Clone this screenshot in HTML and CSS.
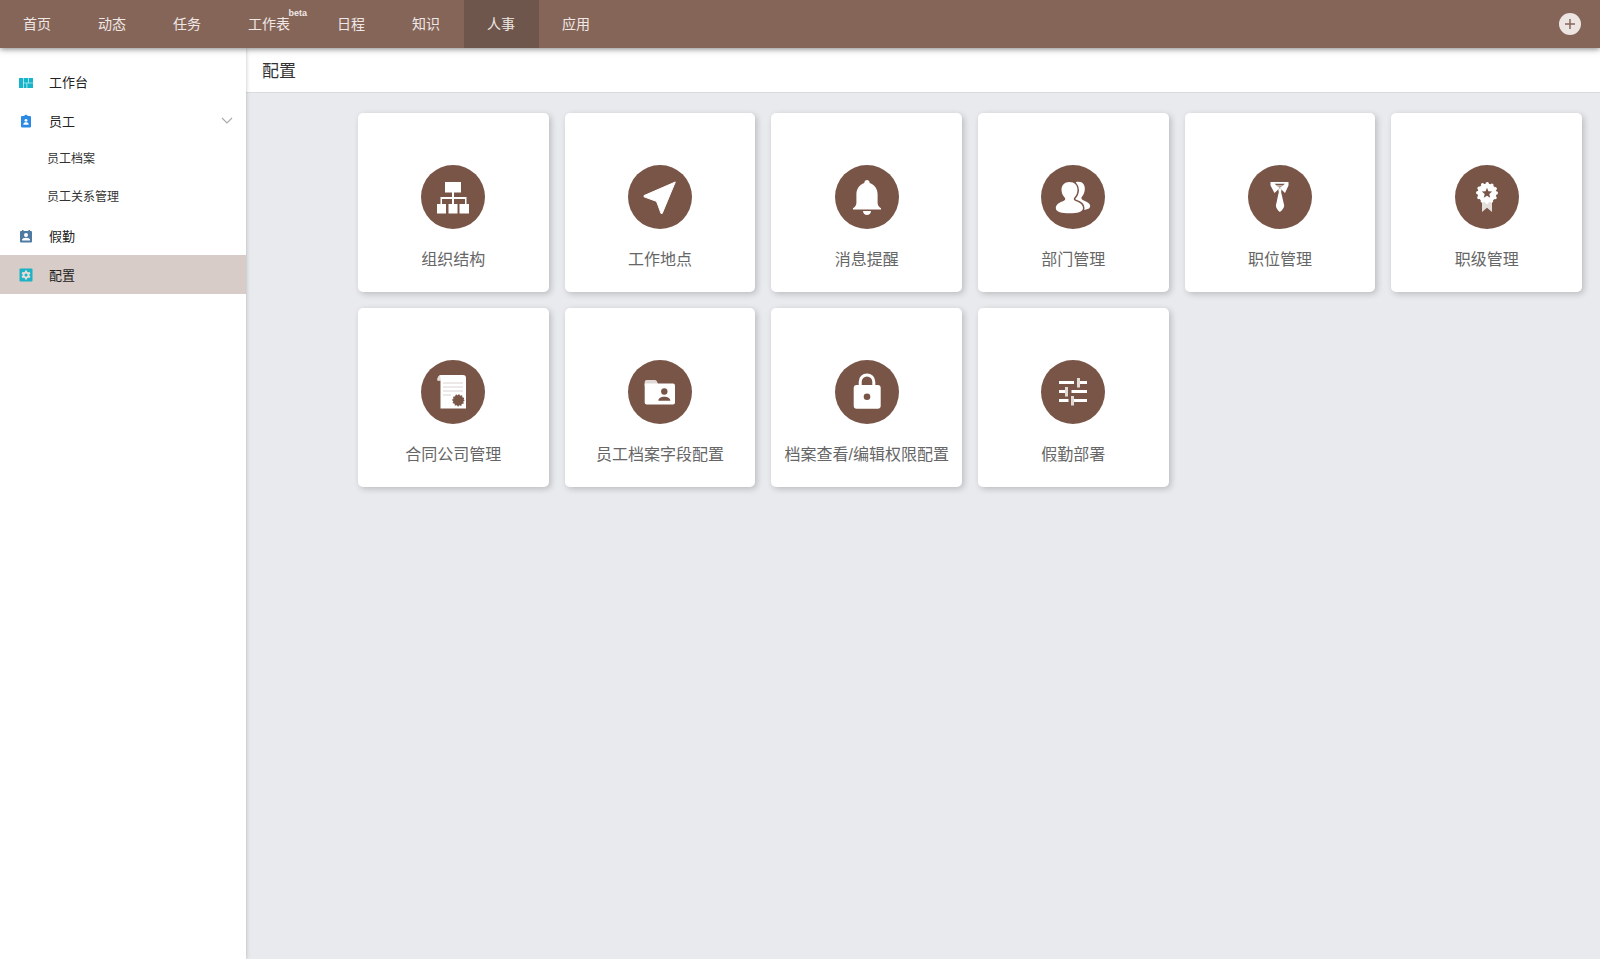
FILE: index.html
```html
<!DOCTYPE html>
<html lang="zh-CN">
<head>
<meta charset="utf-8">
<title>配置</title>
<meta name="viewport" content="width=device-width, initial-scale=1">
<link rel="stylesheet" href="styles.css">
</head>
<body>
<header class="topbar">
  <nav class="topnav">
    <a class="topnav-link" href="#">首页</a>
    <a class="topnav-link" href="#">动态</a>
    <a class="topnav-link" href="#">任务</a>
    <a class="topnav-link" href="#">工作表<span class="beta">beta</span></a>
    <a class="topnav-link" href="#">日程</a>
    <a class="topnav-link" href="#">知识</a>
    <a class="topnav-link active" href="#">人事</a>
    <a class="topnav-link" href="#">应用</a>
  </nav>
  <button class="add" type="button" aria-label="新建">
    <svg width="22" height="22" viewBox="0 0 22 22"><circle cx="11" cy="11" r="11" fill="#ece5e2"/><path d="M11 6v10M6 11h10" stroke="#866559" stroke-width="1.5"/></svg>
  </button>
</header>
<div class="layout">
  <nav class="sidebar">
    <a class="side-link" href="#">
      <svg class="side-icon" viewBox="0 0 16 16" fill="#16b5c9"><path d="M1 4h4v10H1zM5.600 4h4.400v4.700H5.600zM10.600 4H15v4.700h-4.400zM5.600 9.300h3V14h-3zM9.200 9.300H15V14H9.200z"/></svg>
      工作台
    </a>
    <button class="side-link" type="button" aria-expanded="true">
      <svg class="side-icon" viewBox="0 0 16 16"><path fill="#2b8ae6" d="M4 3h2.200a2 2 0 0 1 3.600 0H12a1 1 0 0 1 1 1v9.500a1 1 0 0 1-1 1H4a1 1 0 0 1-1-1V4a1 1 0 0 1 1-1z"/><circle cx="8" cy="7.300" r="1.400" fill="#fff"/><path d="M5.400 11.700v-.7c0-1.200 1.300-1.700 2.600-1.700s2.600.5 2.600 1.700v.7z" fill="#fff"/></svg>
      员工
      <svg class="chevron" viewBox="0 0 12 8"><path d="M1 1l5 5 5-5" fill="none" stroke="#aaa" stroke-width="1.200"/></svg>
    </button>
    <a class="sub-link" href="#">员工档案</a>
    <a class="sub-link" href="#">员工关系管理</a>
    <a class="side-link" href="#">
      <svg class="side-icon" viewBox="0 0 16 16"><path fill="#4f7ba3" d="M3 3h1V2h1.500v1h5V2H12v1h1a1 1 0 0 1 1 1v9.500a1 1 0 0 1-1 1H3a1 1 0 0 1-1-1V4a1 1 0 0 1 1-1z"/><circle cx="8" cy="7" r="2" fill="#fff"/><path d="M4 12.500v-.7C4 10.400 6 9.700 8 9.700s4 .7 4 2.100v.7z" fill="#fff"/></svg>
      假勤
    </a>
    <a class="side-link active" href="#">
      <svg class="side-icon" viewBox="0 0 16 16"><rect x="1.500" y="1.500" width="13" height="13" rx="1" fill="#1db3c4"/><path d="M8 3.500v9M4.100 5.750l7.800 4.500M4.100 10.250l7.800-4.500" stroke="#e6dedb" stroke-width="2.200"/><circle cx="8" cy="8" r="3.300" fill="#e6dedb"/><circle cx="8" cy="8" r="1.500" fill="#1db3c4"/></svg>
      配置
    </a>
  </nav>
  <main class="content">
    <h1 class="page-title">配置</h1>
    <div class="cards">
      <a class="card" href="#">
        <svg class="card-icon" viewBox="0 0 64 64"><circle cx="32" cy="32" r="32" fill="#795548"/><path fill="#fff" d="M24 17h16v10.500h-7V32h12.500v7H48v9.500h-9.500V39H44v-5H33v5h3.500v9.500h-9V39H31v-5H21v5h4v9.500h-9V39h3.500v-7H31v-4.500h-7z"/></svg>
        组织结构
      </a>
      <a class="card" href="#">
        <svg class="card-icon" viewBox="0 0 64 64"><circle cx="32" cy="32" r="32" fill="#795548"/><path fill="#fff" stroke="#fff" stroke-linejoin="round" d="M47.300 17L16 30.600v1.200l11.500 4.200q1.200.6 1.700 2L33 48.500h1.200z"/></svg>
        工作地点
      </a>
      <a class="card" href="#">
        <svg class="card-icon" viewBox="0 0 64 64"><circle cx="32" cy="32" r="32" fill="#795548"/><path fill="#fff" d="M29.300 18c0-4 5.400-4 5.400 0 5 1.700 7.900 6 7.900 11.500V38c0 2.300 1.400 4 3.400 5.200v1.300H18v-1.300c2-1.200 3.400-2.900 3.400-5.200v-8.500C21.400 24 24.300 19.700 29.300 18zM28 46h8c0 5.300-8 5.300-8 0z"/></svg>
        消息提醒
      </a>
      <a class="card" href="#">
        <svg class="card-icon" viewBox="0 0 64 64"><circle cx="32" cy="32" r="32" fill="#795548"/><path fill="#fff" d="M35 17c6-1.500 9.300 2.400 8.800 7.500-.3 3.200-1.400 5.500-3.100 7.500-.8 1.500 0 2.500 2 3.400 4 1.600 6.500 3.400 6.500 5.600 0 2.400-2.500 3.500-6.700 3.800L34 36z"/><path fill="#fff" stroke="#795548" stroke-width="3" paint-order="stroke" d="M28.500 17c5 0 8 3.200 8 8 0 3.300-1.500 6-3.500 8-.8 1.500.2 2.500 2 3.200 4.500 1.300 7 3.800 7 6.800 0 4-6 5.300-13.500 5.300S14.800 47 14.800 43c0-3 2.700-5.500 7.200-6.800 1.800-.7 2.800-1.700 2-3.200-2-2-3.500-4.700-3.500-8 0-4.800 3-8 8-8z"/></svg>
        部门管理
      </a>
      <a class="card" href="#">
        <svg class="card-icon" viewBox="0 0 64 64"><circle cx="32" cy="32" r="32" fill="#795548"/><path fill="#fff" d="M22.500 17h18v3.500L37 28l-5.200-5-5.300 5-4-7.500z"/><path fill="#795548" d="M26.500 18.800h10.500l-5.200 4z"/><path fill="#c5b5af" d="M28.500 20h6.500l-1.600 1.800h-3.400z"/><path fill="#fff" d="M30.300 24.500l1.500-1.300 1.700 1.300-.4 2.500 3.100 13.500c.1 2-2.200 5-4.400 6.500-2-1.500-4-4.500-3.900-6.500L30.800 27z"/></svg>
        职位管理
      </a>
      <a class="card" href="#">
        <svg class="card-icon" viewBox="0 0 64 64"><circle cx="32" cy="32" r="32" fill="#795548"/><path fill="#e5dfdc" d="M27 36v11l5-4.200 5 4.200V36z"/><circle cx="32" cy="28" r="9.500" fill="#fff"/><circle cx="32" cy="28" r="9.300" fill="none" stroke="#fff" stroke-width="3.400" stroke-linecap="round" stroke-dasharray="0 4.869"/><path fill="#795548" d="M32 22.800l1.400 3.500 3.800.3-2.900 2.400.9 3.700-3.200-2-3.200 2 .9-3.700-2.900-2.400 3.800-.3z"/></svg>
        职级管理
      </a>
      <a class="card" href="#">
        <svg class="card-icon" viewBox="0 0 64 64"><circle cx="32" cy="32" r="32" fill="#795548"/><path fill="#fff" d="M19.500 15H42q3 0 3 3v30.500H19.500V20.500h-3q-.4-4.500 3-5.500z"/><path d="M20 20.500h-3.500q-.4-3.500 2.500-5.200" fill="#e5dfdc"/><path d="M22 23h20M22 27h20M22 31h20M22 35h8" stroke="#d8d2d0"/><circle cx="37.300" cy="40.300" r="5.300" fill="#795548"/><circle cx="37.300" cy="40.300" r="5.300" fill="none" stroke="#795548" stroke-width="1.700" stroke-linecap="round" stroke-dasharray="0 2.775"/></svg>
        合同公司管理
      </a>
      <a class="card" href="#">
        <svg class="card-icon" viewBox="0 0 64 64"><circle cx="32" cy="32" r="32" fill="#795548"/><path fill="#e0d9d6" d="M16.700 26v-4q0-2 2-2H27q1.500 0 2 1.500l1 2.500z"/><path fill="#fff" d="M16.700 23.500H45q2 0 2 2v17q0 2-2 2H18.700q-2 0-2-2z"/><circle cx="36.300" cy="31.500" r="3.200" fill="#795548"/><path fill="#795548" d="M30.300 40.800c0-5.300 12-5.300 12 0z"/></svg>
        员工档案字段配置
      </a>
      <a class="card" href="#">
        <svg class="card-icon" viewBox="0 0 64 64"><circle cx="32" cy="32" r="32" fill="#795548"/><path d="M25.200 26v-4.300a6.800 6.800 0 0 1 13.600 0V26" fill="none" stroke="#fff" stroke-width="3"/><rect x="18.700" y="25" width="27" height="23.700" rx="3" fill="#fff"/><circle cx="32" cy="36.700" r="3.300" fill="#795548"/></svg>
        档案查看/编辑权限配置
      </a>
      <a class="card" href="#">
        <svg class="card-icon" viewBox="0 0 64 64"><circle cx="32" cy="32" r="32" fill="#795548"/><path fill="#fff" d="M18 21h15v3H18zM39 21h7v3h-7zM18 30h6v3h-6zM30.500 30H46v3H30.500zM18 39h9.500v3H18zM33 39h13v3H33z"/><path fill="#e0d9d6" d="M36 18h3v9.500h-3zM24 27h3v9.500h-3zM30 36h3v9.500h-3z"/></svg>
        假勤部署
      </a>
    </div>
  </main>
</div>
</body>
</html>
```

FILE: styles.css
```css
* {
  box-sizing: border-box;
}

body {
  margin: 0;
  min-height: 100vh;
  display: flex;
  flex-direction: column;
  background: #e8eaee;
  color: #333;
  font-family: "Liberation Sans", "Noto Sans CJK SC", sans-serif;
  font-size: 13px;
}

a {
  color: inherit;
  text-decoration: none;
}

button {
  border: 0;
  background: none;
  font: inherit;
  color: inherit;
  cursor: pointer;
}

.topbar {
  position: relative;
  z-index: 2;
  display: flex;
  align-items: center;
  justify-content: space-between;
  height: 48px;
  padding-right: 19px;
  background: #866559;
  box-shadow: 0 1px 6px rgba(0, 0, 0, 0.5);
}

.topnav {
  display: flex;
}

.topnav-link {
  position: relative;
  padding: 0 24px 0 23px;
  color: #efe8e6;
  font-size: 14px;
  line-height: 48px;
}

.topnav-link.active {
  background: #6f564c;
}

.beta {
  position: absolute;
  top: 8px;
  right: 7px;
  font-size: 9px;
  font-weight: bold;
  line-height: 10px;
}

.add {
  display: flex;
  padding: 0;
}

.layout {
  flex: 1;
  display: flex;
}

.sidebar {
  position: relative;
  z-index: 1;
  flex: none;
  width: 246px;
  padding-top: 14px;
  background: #fff;
  box-shadow: 0 0 4px rgba(0, 0, 0, 0.25);
}

.side-link {
  display: flex;
  align-items: center;
  width: 100%;
  height: 39px;
  padding: 0 13px 0 18px;
  color: #222;
  text-align: left;
}

.side-link.active {
  background: #d7ccc8;
}

.side-icon {
  width: 16px;
  height: 16px;
  margin-right: 15px;
}

.chevron {
  width: 12px;
  height: 8px;
  margin-left: auto;
}

.sub-link {
  display: block;
  padding-left: 47px;
  font-size: 12px;
  line-height: 38px;
}

.content {
  flex: 1;
}

.page-title {
  margin: 0;
  padding: 4px 16px 0;
  border-bottom: 1px solid #d9dbde;
  background: #fff;
  font-size: 17px;
  font-weight: normal;
  line-height: 40px;
}

.cards {
  display: grid;
  grid-template-columns: repeat(auto-fill, minmax(190px, 1fr));
  gap: 16px;
  padding: 20px 18px 20px 112px;
}

.card {
  display: flex;
  flex-direction: column;
  align-items: center;
  padding: 52px 8px 20px;
  border-radius: 5px;
  background: #fff;
  box-shadow: 2px 2px 6px rgba(0, 0, 0, 0.2);
  color: #666;
  font-size: 16px;
  line-height: 24px;
  white-space: nowrap;
}

.card-icon {
  width: 64px;
  height: 64px;
  margin-bottom: 19px;
}
```
